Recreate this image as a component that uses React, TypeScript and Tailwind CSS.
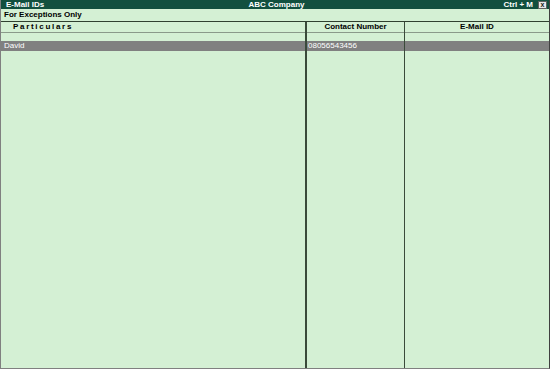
export default function App() {
  const font = { fontFamily: '"Liberation Sans", Arial, sans-serif' };
  return (
    <div
      className="w-[550px] h-[369px] bg-[#d4f0d4] flex flex-col border-l border-b border-l-[#808080] border-b-[#808080] border-r border-r-[#404040] overflow-hidden text-[8px] leading-none"
      style={font}
    >
      {/* Title bar */}
      <div className="h-[9px] bg-[#12503f] flex items-center text-white font-bold pl-[5px] pr-[2px] shrink-0">
        <span className="w-[200px]">E-Mail IDs</span>
        <span className="flex-1 text-center">ABC Company</span>
        <span className="w-[200px] flex justify-end items-center gap-[5px]">
          Ctrl + M
          <span className="w-[9px] h-[8px] bg-[#e8e8e8] border border-[#606060] text-[#202020] text-[7px] flex items-center justify-center">
            x
          </span>
        </span>
      </div>

      {/* Subtitle */}
      <div className="h-[13px] flex items-end pb-[2px] px-[3px] font-bold text-black border-b border-b-[#304030] shrink-0">
        For Exceptions Only
      </div>

      {/* Table */}
      <div className="flex-1 flex">
        <div className="w-[304px] flex flex-col">
          <div className="h-[11px] flex items-end pb-[1px] pl-[12px] font-bold tracking-[1.7px] border-b border-b-[#8a9a8a]">
            Particulars
          </div>
          <div className="h-[8px]" />
          <div className="h-[10px] bg-[#808080] text-white flex items-center pl-[3px]">David</div>
        </div>
        <div className="w-[99px] flex flex-col border-l-2 border-l-[#3a4a3a]">
          <div className="h-[11px] flex items-end pb-[1px] justify-center font-bold border-b border-b-[#8a9a8a]">
            Contact Number
          </div>
          <div className="h-[8px]" />
          <div className="h-[10px] bg-[#808080] text-white flex items-center pl-[1px]">08056543456</div>
        </div>
        <div className="flex-1 flex flex-col border-l border-l-[#3a4a3a]">
          <div className="h-[11px] flex items-end pb-[1px] justify-center font-bold border-b border-b-[#8a9a8a]">
            E-Mail ID
          </div>
          <div className="h-[8px]" />
          <div className="h-[10px] bg-[#808080]" />
        </div>
      </div>
    </div>
  );
}
